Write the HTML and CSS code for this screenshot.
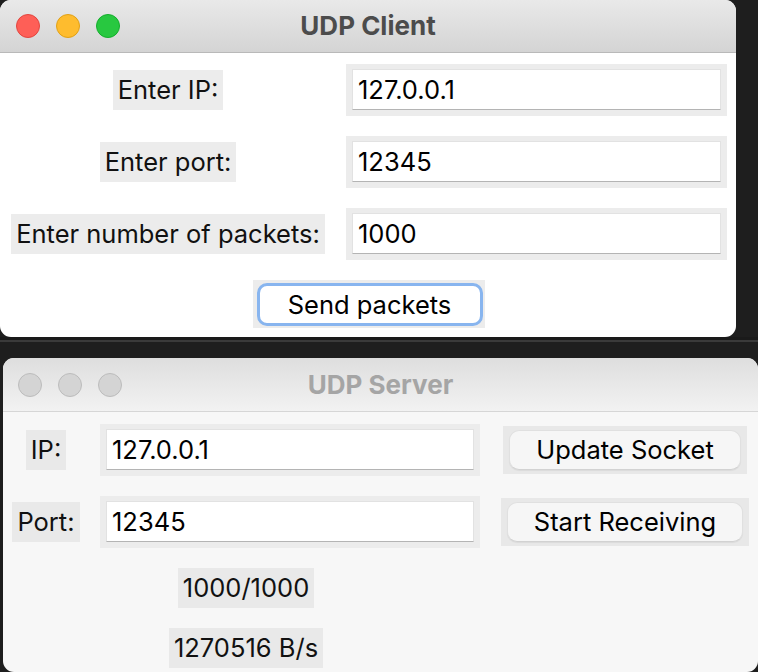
FILE: index.html
```html
<!DOCTYPE html>
<html lang="en">
<head>
<meta charset="utf-8">
<title>UDP Client / Server</title>
<link rel="stylesheet" href="styles.css">
</head>
<body>
<div class="desk">
  <section class="win client">
    <header class="titlebar">
      <div class="lights">
        <span class="light red"></span>
        <span class="light yellow"></span>
        <span class="light green"></span>
      </div>
      <h1 class="title">UDP Client</h1>
      <div class="spacer"></div>
    </header>
    <div class="client-body">
      <span class="label">Enter IP:</span>
      <div class="entry"><div class="field">127.0.0.1</div></div>
      <span class="label">Enter port:</span>
      <div class="entry"><div class="field">12345</div></div>
      <span class="label">Enter number of packets:</span>
      <div class="entry"><div class="field">1000</div></div>
      <div class="btn-frame send-frame"><button class="btn focused">Send packets</button></div>
    </div>
  </section>

  <div class="gap"></div>

  <section class="win server">
    <header class="titlebar inactive">
      <div class="lights">
        <span class="light gray"></span>
        <span class="light gray"></span>
        <span class="light gray"></span>
      </div>
      <h1 class="title">UDP Server</h1>
      <div class="spacer"></div>
    </header>
    <div class="server-body">
      <span class="label">IP:</span>
      <div class="entry"><div class="field">127.0.0.1</div></div>
      <div class="btn-frame"><button class="btn plain">Update Socket</button></div>
      <span class="label">Port:</span>
      <div class="entry"><div class="field">12345</div></div>
      <div class="btn-frame"><button class="btn plain">Start Receiving</button></div>
      <span class="label span2">1000/1000</span>
      <span class="label span2">1270516 B/s</span>
    </div>
  </section>
</div>
</body>
</html>
```

FILE: styles.css
```css
* { box-sizing: border-box; }

html, body {
  margin: 0;
  padding: 0;
  background: #1e1e1e;
}

body {
  width: 758px;
  height: 672px;
  overflow: hidden;
  font-family: Inter, "Liberation Sans", sans-serif;
  font-size: 25.5px;
  color: #111;
}

.desk {
  display: flex;
  flex-direction: column;
}

.win {
  border-radius: 11px;
  overflow: hidden;
  display: flex;
  flex-direction: column;
}

.client {
  width: 736px;
  height: 337px;
  background: #ffffff;
}

.gap {
  height: 21px;
  border-top: 3px solid #1a1a1a;
  background: linear-gradient(#3a3a3a 0, #3a3a3a 2px, #1e1e1e 2px);
}

.server {
  margin-left: 3px;
  width: 755px;
  height: 314px;
  background: #f7f7f7;
}

/* title bars */
.titlebar {
  height: 53px;
  flex: none;
  display: grid;
  grid-template-columns: 1fr auto 1fr;
  align-items: center;
  background: linear-gradient(#e9e9e9, #d4d4d4);
  border-bottom: 1px solid #b9b9b9;
}

.titlebar.inactive {
  height: 54px;
  background: linear-gradient(#dedede, #f2f2f2);
  border-bottom: 1px solid #d6d6d6;
}

.lights {
  display: flex;
  gap: 16px;
  padding-left: 16px;
}

.server .lights { padding-left: 15px; }

.light {
  width: 24px;
  height: 24px;
  border-radius: 50%;
  border: 1px solid transparent;
}

.red { background: #fe5f57; border-color: #e2463f; }
.yellow { background: #febc2e; border-color: #e1a116; }
.green { background: #28c840; border-color: #14ae2c; }
.gray { background: #d4d4d4; border-color: #bcbcbc; }

.title {
  margin: 0;
  font-size: 26px;
  font-weight: 700;
  color: #4c4c4c;
  line-height: 1;
}

.inactive .title { color: #a5a5a5; }

/* client body */
.client-body {
  display: grid;
  grid-template-columns: 316px 381px;
  grid-template-rows: 52px 52px 52px 48px;
  column-gap: 20px;
  row-gap: 20px;
  padding: 11px 9px 9px 10px;
}

.server-body {
  display: grid;
  grid-template-columns: 68px 380px 250px;
  grid-template-rows: 52px 52px 40px 40px;
  column-gap: 20px;
  row-gap: 20px;
  padding: 12px 9px 4px 9px;
}

.label {
  justify-self: center;
  align-self: center;
  height: 40px;
  line-height: 40px;
  padding: 0 5px;
  background: #ececec;
  white-space: nowrap;
}

.server .label { background: #e9e9e9; }

.span2 { grid-column: 1 / span 2; }

.entry {
  background: #ececec;
  padding: 5px 6px 6px 6px;
}

.field {
  height: 41px;
  background: #fff;
  border: 1px solid #e2e2e2;
  border-bottom: 1px solid #b4b4b4;
  line-height: 39px;
  padding-left: 5px;
  color: #000;
}

.btn-frame {
  justify-self: center;
  align-self: center;
  background: #ececec;
  display: flex;
}

.send-frame {
  grid-column: 1 / span 2;
  width: 232px;
  height: 48px;
  padding: 3px 2px 2px 4px;
}

.btn {
  font: inherit;
  color: #000;
  margin: 0;
  cursor: default;
}

.btn.focused {
  flex: 1;
  background: #fff;
  border: 3px solid #88b5ef;
  border-radius: 10px;
  padding: 0;
}

.server .btn-frame {
  height: 48px;
  padding: 4px 6px;
  background: #e8e8e8;
}

.btn.plain {
  height: 40px;
  padding: 0 26px;
  background: #f6f6f6;
  border: 1px solid #e0e0e0;
  border-bottom-color: #d2d2d2;
  border-radius: 10px;
  box-shadow: 0 1px 1px rgba(0,0,0,0.06);
  line-height: 38px;
}
```
